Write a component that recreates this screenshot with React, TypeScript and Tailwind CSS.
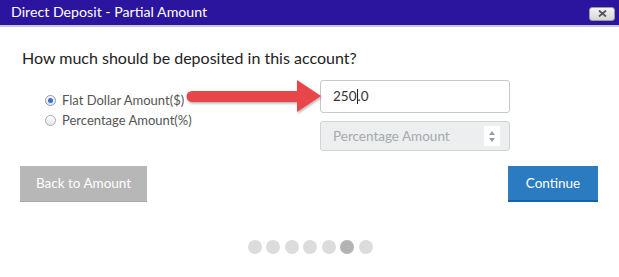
const dots = [0, 1, 2, 3, 4, 5, 6]
const ACTIVE = 5

export default function App() {
  return (
    <div className="relative w-[619px] h-[277px] bg-white overflow-hidden font-['Lato',sans-serif]">
      {/* Title bar */}
      <div className="h-[27px] bg-[#2b149e] border-b-2 border-[#c9c6dc] flex items-center justify-between pl-[11px] pr-[4px]">
        <span className="text-white text-[14.2px] leading-none">Direct Deposit - Partial Amount</span>
        <button className="w-[26px] h-[14px] mt-[2px] rounded-[3px] bg-gradient-to-b from-[#f4f4f4] to-[#d6d6d6] border border-[#9a9a9a] flex items-center justify-center">
          <svg width="9" height="7" viewBox="0 0 9 7">
            <path d="M1 0.5 L8 6.5 M8 0.5 L1 6.5" stroke="#555" strokeWidth="1.8" />
          </svg>
        </button>
      </div>

      {/* Body */}
      <div className="px-[20px]">
        <h2 className="mt-[21px] ml-[2px] text-[16px] leading-[20px] text-[#222]">
          How much should be deposited in this account?
        </h2>

        <div className="flex mt-[12px]">
          <div className="w-[300px] pl-[25px] pt-[13px] flex flex-col gap-[5px] text-[13px] text-[#555]">
            <label className="flex items-center gap-[6px] leading-[15px]">
              <span className="w-[11px] h-[11px] rounded-full border border-[#8e9aaa] bg-gradient-to-b from-white to-[#e3e6ea] flex items-center justify-center">
                <span className="w-[5px] h-[5px] rounded-full bg-[#3b6fd1]" />
              </span>
              Flat Dollar Amount($)
            </label>
            <label className="flex items-center gap-[6px] leading-[15px]">
              <span className="w-[11px] h-[11px] rounded-full border border-[#a5adb8] bg-gradient-to-b from-white to-[#e3e6ea]" />
              Percentage Amount(%)
            </label>
          </div>

          <div className="w-[190px] flex flex-col gap-[8px]">
            <div className="h-[33px] border border-[#c8c8c8] rounded-[3px] flex items-center pl-[12px] text-[13.5px] text-[#333]">
              250<span className="inline-block w-px h-[15px] bg-[#222]" />.0
            </div>
            <div className="h-[30px] border border-[#cfd3d5] rounded-[3px] bg-[#eceef0] flex items-center justify-between pl-[12px] pr-[9px] text-[13.5px] text-[#a6aaad]">
              Percentage Amount
              <span className="w-[16px] h-[20px] bg-white flex flex-col items-center justify-center gap-[3px]">
                <svg width="6" height="4" viewBox="0 0 6 4"><path d="M0 4 L3 0 L6 4Z" fill="#9a9ea2" /></svg>
                <svg width="6" height="4" viewBox="0 0 6 4"><path d="M0 0 L3 4 L6 0Z" fill="#9a9ea2" /></svg>
              </span>
            </div>
          </div>
        </div>

        <div className="flex justify-between mt-[15px] pr-[1px]">
          <button className="w-[127px] h-[36px] bg-[#b7b7b7] border-b border-[#a9a9a9] text-white text-[13.5px]">
            Back to Amount
          </button>
          <button className="w-[90px] h-[36px] bg-[#2a7bbf] border-b-2 border-[#1762a6] text-white text-[13.5px]">
            Continue
          </button>
        </div>

        <div className="flex justify-center gap-[4.5px] mt-[38px] ml-[1px]">
          {dots.map((d) => (
            <span
              key={d}
              className={d === ACTIVE ? 'w-[14px] h-[14px] rounded-full bg-[#b3b3b3]' : 'w-[14px] h-[14px] rounded-full bg-[#dcdcdc]'}
            />
          ))}
        </div>
      </div>

      {/* Annotation arrow */}
      <svg className="absolute left-[180px] top-[77px]" width="145" height="42" viewBox="0 0 145 42">
        <defs>
          <filter id="sh" x="-10%" y="-30%" width="120%" height="160%">
            <feDropShadow dx="1" dy="1.5" stdDeviation="1.2" floodColor="#000" floodOpacity="0.3" />
          </filter>
        </defs>
        <g filter="url(#sh)">
          <path d="M12 14 L117 14 L117 3 L141 19 L117 35 L117 25 L12 25 A5.5 5.5 0 0 1 12 14 Z" fill="#e8474a" />
        </g>
      </svg>
    </div>
  )
}
